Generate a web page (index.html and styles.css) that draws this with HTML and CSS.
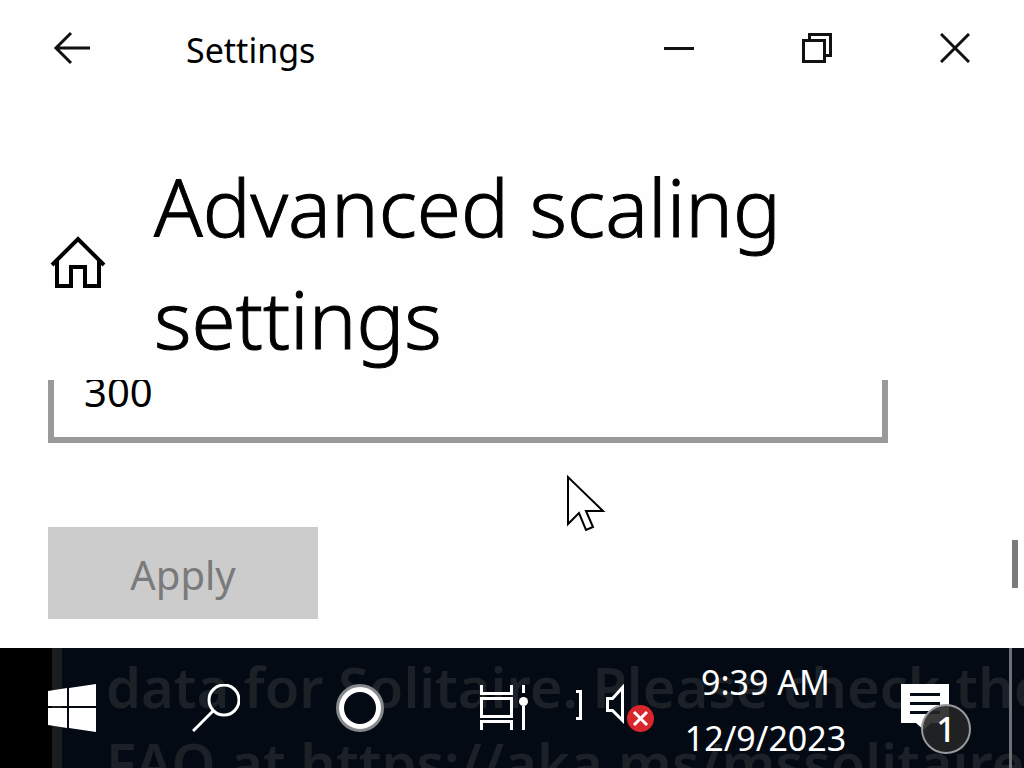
FILE: index.html
```html
<!DOCTYPE html>
<html lang="en">
<head>
  <title>Settings</title>
  <meta charset="utf-8">
  <link rel="stylesheet" href="styles.css">
</head>
<body>
  <div class="titlebar">
    <button class="back" aria-label="Back">
      <svg width="38" height="34" viewBox="0 0 38 34"><path d="M37 17H3M18 2L3 17l15 15"/></svg>
    </button>
    <span class="window-title">Settings</span>
    <div class="window-buttons">
      <button aria-label="Minimize">
        <svg width="30" height="30" viewBox="0 0 30 30"><path d="M0 15.500h30"/></svg>
      </button>
      <button aria-label="Restore">
        <svg width="30" height="30" viewBox="0 0 30 30"><path d="M1.500 7.500h21v21h-21zM7.500 7.500v-6h21v21h-6"/></svg>
      </button>
      <button aria-label="Close">
        <svg width="30" height="30" viewBox="0 0 30 30"><path d="M1 1l28 28M29 1L1 29"/></svg>
      </button>
    </div>
  </div>

  <header class="page-header">
    <a class="home" href="#" aria-label="Home">
      <svg width="56" height="54" viewBox="0 0 56 54"><path d="M2 30L28 4l26 26M7 26v25h14V32h14v19h14V26"/></svg>
    </a>
    <h1>Advanced scaling settings</h1>
  </header>

  <main class="content">
    <input type="text" class="scale-input" aria-label="Custom scaling" value="300">
    <button class="apply" disabled>Apply</button>
    <div class="scroll-thumb"></div>
    <svg class="cursor" width="40" height="58" viewBox="0 0 40 58"><path d="M2 3v47l11-11 7 17 7-3-7-16h17z"/></svg>
  </main>

  <footer class="taskbar">
    <!-- window showing through the translucent taskbar -->
    <div class="behind" aria-hidden="true">
      <p>data for Solitaire. Please check the</p>
      <p>FAQ at https://aka.ms/mssolitaire</p>
    </div>

    <button class="task" aria-label="Start">
      <svg width="48" height="48" viewBox="0 0 48 48"><path class="fill" d="M0 7l19-3v18H0zM21 4l27-4v22H21zM0 24h19v20L0 41zM21 24h27v24l-27-4z"/></svg>
    </button>
    <button class="task" aria-label="Search">
      <svg width="48" height="48" viewBox="0 0 48 48"><circle cx="32" cy="16" r="15"/><path d="M21 27L1 47"/></svg>
    </button>
    <button class="task" aria-label="Cortana">
      <svg width="48" height="48" viewBox="0 0 48 48"><circle class="ring-outer" cx="24" cy="24" r="22"/><circle class="ring" cx="24" cy="24" r="18.500"/></svg>
    </button>
    <button class="task" aria-label="Task View">
      <svg width="48" height="48" viewBox="0 0 48 48"><path d="M1.500 1v8.500h30V1M1.500 14.500h30v18h-30zM1.500 46v-8.500h30V46M43.500 1v8M43.500 22v24"/><circle class="fill" cx="43.500" cy="17.500" r="4.500"/></svg>
    </button>

    <div class="tray">
      <svg class="bracket" width="6" height="30" viewBox="0 0 6 30"><path d="M0 1.500h4.500v27H0"/></svg>
      <button class="volume" aria-label="Volume">
        <svg width="48" height="48" viewBox="0 0 48 48"><path d="M1.500 14.500h5l10-11v33l-10-10h-5z"/><circle class="error" cx="34.500" cy="34.500" r="13.500"/><path class="cross" d="M28 28l13 13M41 28L28 41"/></svg>
      </button>
      <div class="clock">
        <div>9:39 AM</div>
        <div>12/9/2023</div>
      </div>
      <button class="notifications" aria-label="Notifications, 1 new">
        <svg width="48" height="48" viewBox="0 0 48 48"><path class="fill" d="M0 0h48v39H30l-7 7-8-7H0z"/><path class="lines" d="M9 10.500h30M9 19.500h30M9 28.500h30"/></svg>
        <span class="badge">1</span>
      </button>
      <div class="show-desktop"></div>
    </div>
  </footer>
</body>
</html>
```
FILE: styles.css
```css
* {
  box-sizing: border-box;
}

body {
  margin: 0;
  height: 100vh;
  display: flex;
  flex-direction: column;
  overflow: hidden;
  background: #fefefe;
  color: #000;
  font-family: "Noto Sans", "Open Sans", sans-serif;
}

button {
  padding: 0;
  border: none;
  background: none;
  font-family: inherit;
}

svg {
  display: block;
  fill: none;
  stroke: #111;
  stroke-width: 3;
}

.titlebar {
  display: flex;
  align-items: center;
  flex-shrink: 0;
  height: 96px;
}

.back {
  width: 144px;
  height: 96px;
  display: flex;
  align-items: center;
  justify-content: center;
}

.window-title {
  flex: 1;
  padding: 4px 0 0 42px;
  font-size: 34px;
}

.window-buttons {
  display: flex;
}

.window-buttons button {
  width: 138px;
  height: 96px;
  display: flex;
  align-items: center;
  justify-content: center;
}

.page-header {
  display: flex;
  align-items: center;
  flex-shrink: 0;
  gap: 48px;
  height: 284px;
  padding: 48px 200px 0 50px;
}

.home svg {
  stroke: #000;
  stroke-width: 4;
}

h1 {
  margin: 0;
  font-size: 80px;
  font-weight: 300;
  line-height: 112px;
  -webkit-text-stroke: 1px #000;
}

.content {
  position: relative;
  flex: 1;
  min-height: 0;
  display: flex;
  flex-direction: column;
  justify-content: flex-end;
  align-items: flex-start;
  gap: 84px;
  padding: 0 136px 29px 48px;
  overflow: hidden;
}

.scale-input {
  flex-shrink: 0;
  width: 100%;
  height: 104px;
  padding: 0 30px;
  border: 6px solid #999;
  background: #fefefe;
  color: #000;
  font-family: inherit;
  font-size: 40px;
}

.apply {
  flex-shrink: 0;
  width: 270px;
  height: 92px;
  padding-top: 2px;
  background: #ccc;
  color: #7a7a7a;
  font-size: 40px;
}

.scroll-thumb {
  position: absolute;
  right: 6px;
  bottom: 60px;
  width: 6px;
  height: 48px;
  background: #7a7a7a;
}

.cursor {
  position: absolute;
  left: 566px;
  top: 94px;
  fill: #fff;
  stroke: #000;
  stroke-width: 2;
}

.taskbar {
  position: relative;
  display: flex;
  flex-shrink: 0;
  height: 120px;
  overflow: hidden;
  background: linear-gradient(to right, #000 52px, #1b1d1f 52px, #1b1d1f 62px, #030a14 62px);
  color: #fff;
}

.taskbar svg {
  stroke: #fff;
}

.taskbar .fill {
  fill: #fff;
  stroke: none;
}

.behind {
  position: absolute;
  left: 106px;
  top: 0;
  color: #1c2127;
  font-size: 56px;
  font-weight: 600;
  line-height: 76px;
  white-space: nowrap;
}

.behind p {
  margin: 0;
}

.task {
  position: relative;
  width: 144px;
  display: flex;
  align-items: center;
  justify-content: center;
}

.taskbar .ring-outer {
  stroke: #85888c;
  stroke-width: 4;
}

.taskbar .ring {
  fill: #030a14;
  stroke-width: 5;
}

.tray {
  position: relative;
  flex: 1;
  display: flex;
  align-items: center;
}

.bracket {
  margin-bottom: 6px;
}

.volume {
  margin-left: 24px;
}

.taskbar .error {
  fill: #d9262c;
  stroke: none;
}

.clock {
  flex: 1;
  padding-top: 4px;
  font-size: 34px;
  line-height: 56px;
  text-align: center;
}

.notifications {
  position: relative;
  margin: 0 60px 0 24px;
}

.taskbar .lines {
  stroke: #030a14;
}

.badge {
  position: absolute;
  left: 20px;
  top: 20px;
  width: 50px;
  height: 50px;
  border: 2px solid #97999b;
  border-radius: 50%;
  background: rgba(35, 35, 35, 0.9);
  color: #fff;
  font-size: 34px;
  font-weight: 500;
  line-height: 46px;
  text-align: center;
}

.show-desktop {
  align-self: stretch;
  width: 15px;
  border-left: 3px solid #6d7074;
}
```
